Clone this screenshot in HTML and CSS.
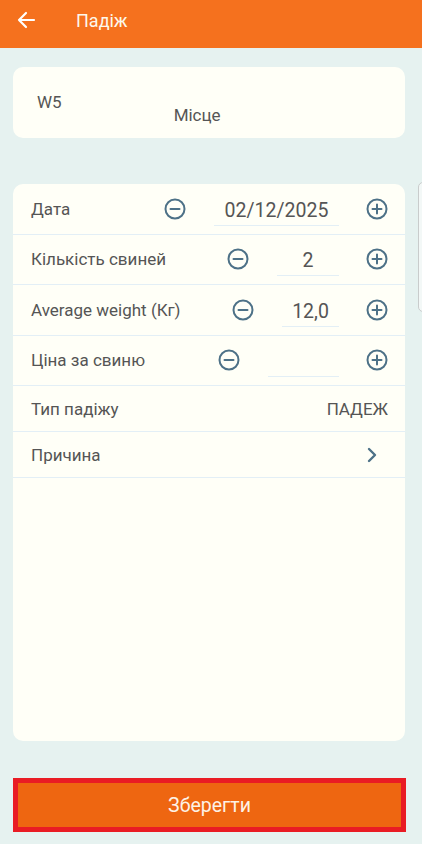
FILE: index.html
```html
<!DOCTYPE html>
<html lang="uk">
<head>
<meta charset="utf-8">
<link rel="stylesheet" href="styles.css">
</head>
<body>
<div class="app">
  <header class="topbar">
    <svg class="back" width="20" height="20" viewBox="0 0 20 20"><path d="M18 10H3M10 3L3 10L10 17" fill="none" stroke="#fff" stroke-width="2.2" stroke-linecap="round" stroke-linejoin="round"/></svg>
    <span class="title">Падіж</span>
  </header>
  <main class="content">
    <section class="card place">
      <span class="code">W5</span>
      <span class="place-label">Місце</span>
    </section>
    <section class="card form">
      <div class="row">
        <span class="label">Дата</span>
        <div class="stepper">
          <svg class="ic" width="22" height="22" viewBox="0 0 22 22"><circle cx="11" cy="11" r="9.5" fill="none" stroke="#4d7187" stroke-width="2"/><path d="M6.5 11h9" stroke="#4d7187" stroke-width="2" stroke-linecap="round"/></svg>
          <span class="field w-date">02/12/2025</span>
          <svg class="ic" width="22" height="22" viewBox="0 0 22 22"><circle cx="11" cy="11" r="9.5" fill="none" stroke="#4d7187" stroke-width="2"/><path d="M6.5 11h9M11 6.5v9" stroke="#4d7187" stroke-width="2" stroke-linecap="round"/></svg>
        </div>
      </div>
      <div class="row">
        <span class="label">Кількість свиней</span>
        <div class="stepper">
          <svg class="ic" width="22" height="22" viewBox="0 0 22 22"><circle cx="11" cy="11" r="9.5" fill="none" stroke="#4d7187" stroke-width="2"/><path d="M6.5 11h9" stroke="#4d7187" stroke-width="2" stroke-linecap="round"/></svg>
          <span class="field w-count">2</span>
          <svg class="ic" width="22" height="22" viewBox="0 0 22 22"><circle cx="11" cy="11" r="9.5" fill="none" stroke="#4d7187" stroke-width="2"/><path d="M6.5 11h9M11 6.5v9" stroke="#4d7187" stroke-width="2" stroke-linecap="round"/></svg>
        </div>
      </div>
      <div class="row">
        <span class="label">Average weight (Кг)</span>
        <div class="stepper">
          <svg class="ic" width="22" height="22" viewBox="0 0 22 22"><circle cx="11" cy="11" r="9.5" fill="none" stroke="#4d7187" stroke-width="2"/><path d="M6.5 11h9" stroke="#4d7187" stroke-width="2" stroke-linecap="round"/></svg>
          <span class="field w-weight">12,0</span>
          <svg class="ic" width="22" height="22" viewBox="0 0 22 22"><circle cx="11" cy="11" r="9.5" fill="none" stroke="#4d7187" stroke-width="2"/><path d="M6.5 11h9M11 6.5v9" stroke="#4d7187" stroke-width="2" stroke-linecap="round"/></svg>
        </div>
      </div>
      <div class="row">
        <span class="label">Ціна за свиню</span>
        <div class="stepper">
          <svg class="ic" width="22" height="22" viewBox="0 0 22 22"><circle cx="11" cy="11" r="9.5" fill="none" stroke="#4d7187" stroke-width="2"/><path d="M6.5 11h9" stroke="#4d7187" stroke-width="2" stroke-linecap="round"/></svg>
          <span class="field w-price"></span>
          <svg class="ic" width="22" height="22" viewBox="0 0 22 22"><circle cx="11" cy="11" r="9.5" fill="none" stroke="#4d7187" stroke-width="2"/><path d="M6.5 11h9M11 6.5v9" stroke="#4d7187" stroke-width="2" stroke-linecap="round"/></svg>
        </div>
      </div>
      <div class="row short">
        <span class="label">Тип падіжу</span>
        <span class="value">ПАДЕЖ</span>
      </div>
      <div class="row short">
        <span class="label">Причина</span>
        <svg class="chev" width="12" height="16" viewBox="0 0 12 16"><path d="M3 2l6 6-6 6" fill="none" stroke="#4d7187" stroke-width="2.4" stroke-linecap="round" stroke-linejoin="round"/></svg>
      </div>
    </section>
    <div class="peek"></div>
  </main>
  <footer class="footer">
    <button class="save">Зберегти</button>
  </footer>
</div>
</body>
</html>
```
FILE: styles.css
```css
* { box-sizing: border-box; }
html, body { margin: 0; padding: 0; }
body {
  width: 422px;
  height: 844px;
  background: #e6f2f0;
  font-family: Roboto, "Noto Sans", sans-serif;
  color: #555;
  overflow: hidden;
}
.app {
  display: flex;
  flex-direction: column;
  height: 844px;
}
.topbar {
  height: 48px;
  background: #f5711e;
  display: flex;
  align-items: center;
  padding-left: 16px;
  flex-shrink: 0;
}
.back { margin-top: -8px; }
.title {
  color: #fdf8ec;
  font-size: 18px;
  margin-left: 40px;
  margin-top: -8px;
}
.content {
  position: relative;
  padding: 19px 17px 0 13px;
  display: flex;
  flex-direction: column;
  gap: 46px;
}
.card {
  background: #fffff7;
  border-radius: 10px;
}
.place {
  height: 71px;
  position: relative;
  padding: 25px 0 0 24px;
  font-size: 17px;
  display: flex;
  align-items: flex-start;
}
.code { line-height: 20px; color: #555; }
.place-label { margin: 13px 0 0 112px; line-height: 20px; }
.form {
  height: 557px;
  display: flex;
  flex-direction: column;
}
.row {
  height: 50.5px;
  display: flex;
  align-items: center;
  padding: 0 17px 0 18px;
  border-bottom: 1.5px solid #e3eff6;
  font-size: 17px;
}
.row.short { height: 46px; }
.label { flex: 1; line-height: 20px; }
.stepper {
  display: flex;
  align-items: center;
  gap: 28px;
}
.ic { display: block; }
.stepper .ic:last-child { margin-left: -1px; }
.field {
  height: 30px;
  line-height: 28px;
  font-size: 19.5px;
  text-align: center;
  border-bottom: 1.5px solid #e3eff6;
  color: #555;
  margin-top: 4px;
  padding-top: 1px;
}
.w-date { width: 125px; }
.w-count { width: 62px; }
.w-weight { width: 57px; }
.w-price { width: 71px; }
.value { color: #555; margin-right: 0; }
.chev { margin-right: 10px; }
.peek {
  position: absolute;
  left: 418px;
  top: 134px;
  width: 20px;
  height: 130px;
  border: 1px solid #c9cccc;
  border-radius: 5px;
  background: #f3f8f7;
}
.footer {
  margin-top: auto;
  padding: 0 16px 12px 13px;
}
.save {
  display: block;
  width: 393px;
  height: 54px;
  background: #ee6611;
  border: 5px solid #e91c24;
  color: #fdf2e6;
  font-family: Roboto, "Noto Sans", sans-serif;
  font-size: 19.5px;
  padding: 0;
}
```
